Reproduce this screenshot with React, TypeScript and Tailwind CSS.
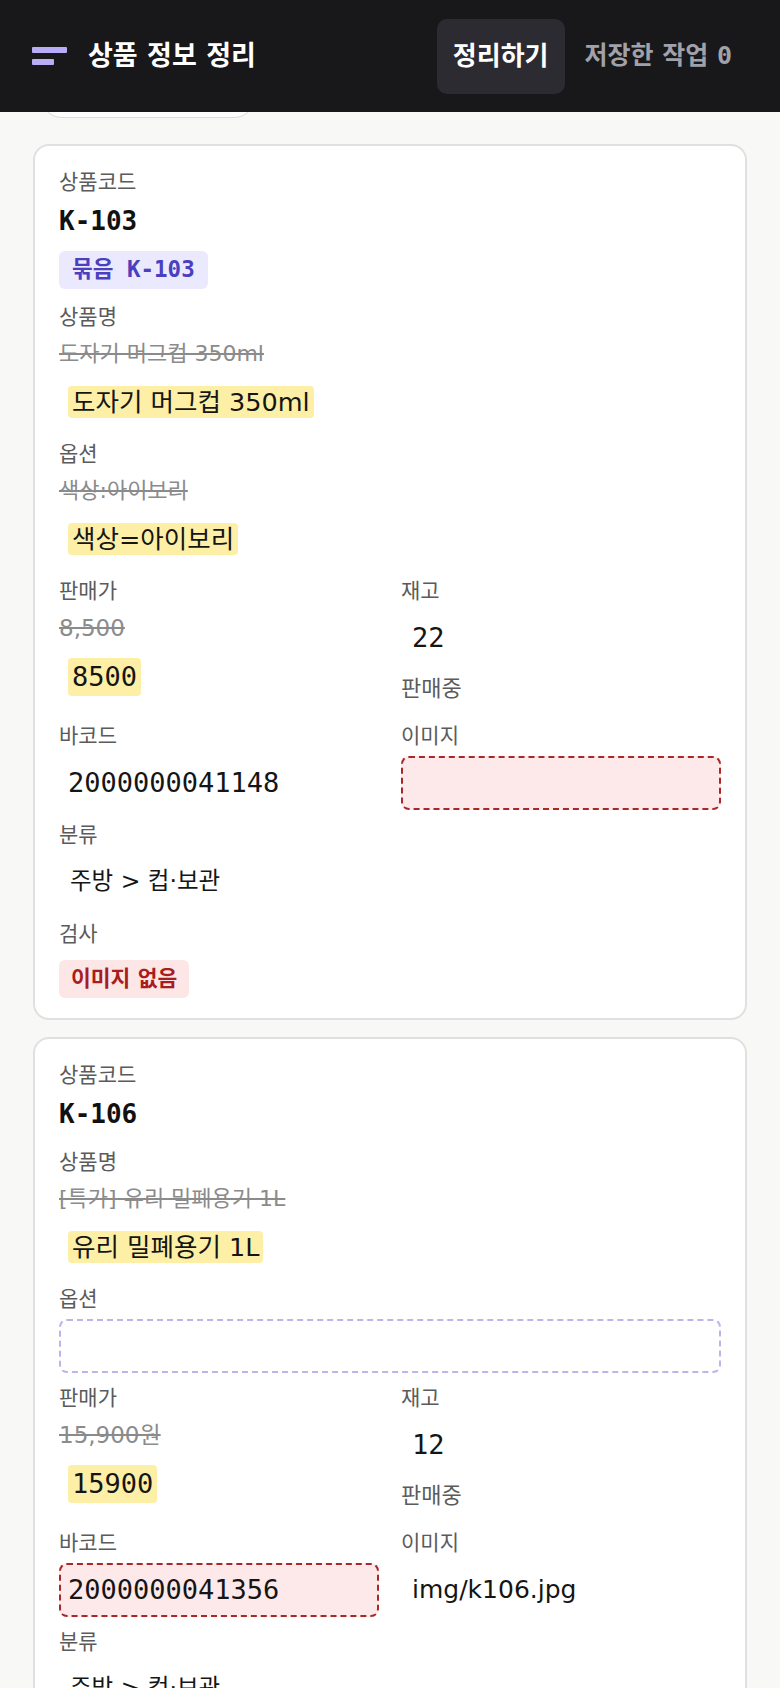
import type { ReactNode } from 'react'

const SANS = 'font-["DejaVu_Sans","Noto_Sans_CJK_KR",sans-serif]'
const MONO = 'font-["DejaVu_Sans_Mono","Noto_Sans_CJK_KR",monospace]'

type BoxState = 'plain' | 'missing' | 'empty'

interface Product {
  code:      string
  bundle?:   string
  name:      { before: string; after: string }
  option:    { before?: string; after?: string }
  price:     { before: string; after: string }
  stock:     string
  status:    string
  barcode:   { value: string; state: BoxState }
  image:     { value?: string; state: BoxState }
  category:  string
  checks:    string[]
}

const PRODUCTS: Product[] = [
  {
    code:     'K-103',
    bundle:   'K-103',
    name:     { before: '도자기 머그컵 350ml', after: '도자기 머그컵 350ml' },
    option:   { before: '색상:아이보리', after: '색상=아이보리' },
    price:    { before: '8,500', after: '8500' },
    stock:    '22',
    status:   '판매중',
    barcode:  { value: '2000000041148', state: 'plain' },
    image:    { state: 'missing' },
    category: '주방 > 컵·보관',
    checks:   ['이미지 없음'],
  },
  {
    code:     'K-106',
    name:     { before: '[특가] 유리 밀폐용기 1L', after: '유리 밀폐용기 1L' },
    option:   {},
    price:    { before: '15,900원', after: '15900' },
    stock:    '12',
    status:   '판매중',
    barcode:  { value: '2000000041356', state: 'missing' },
    image:    { value: 'img/k106.jpg', state: 'plain' },
    category: '주방 > 컵·보관',
    checks:   ['바코드 확인'],
  },
]

function Label({ children }: { children: ReactNode }) {
  return (
    <p className={`${SANS} text-[21px] leading-[28px] text-[#5b5b5b]`}>{children}</p>
  )
}

function Before({ children }: { children: ReactNode }) {
  return (
    <p className={`${SANS} mt-[8px] text-[22px] leading-[30px] text-[#8b8b8b] line-through`}>
      {children}
    </p>
  )
}

function ValueBox({ state = 'plain', children }: { state?: BoxState; children?: ReactNode }) {
  const look =
    state === 'missing'
      ? 'border-dashed border-[#a82828] bg-[#fde9e9]'
      : state === 'empty'
        ? 'border-dashed border-[#bdb4ea] bg-white'
        : 'border-transparent'
  return (
    <div className={`mt-[6px] flex h-[54px] items-center rounded-lg border-2 px-[7px] text-[#151515] ${look}`}>
      {children}
    </div>
  )
}

function Mark({ mono, children }: { mono?: boolean; children: ReactNode }) {
  return (
    <span
      className={
        mono
          ? `${MONO} inline-flex h-[38px] items-center rounded-[4px] bg-[#fdf0a6] px-1 text-[27px]`
          : `${SANS} inline-flex h-[32px] items-center rounded-[4px] bg-[#fdf0a6] px-1 text-[25.5px]`
      }
    >
      {children}
    </span>
  )
}

function ProductCard({ p }: { p: Product }) {
  return (
    <article className="rounded-[16px] border-2 border-[#e0e0e0] bg-white px-6 pt-[22px] pb-[20px]">
      <div className="flex flex-col gap-[11px]">
        <div className="mb-[3px]">
          <Label>상품코드</Label>
          <p className={`${MONO} mt-[5px] text-[26px] font-bold leading-[40px] text-[#111]`}>{p.code}</p>
          {p.bundle && (
            <span
              className={`${MONO} mt-[10px] inline-flex h-[38px] items-center rounded-md bg-[#ebe9fd] px-[13px] text-[22.5px] font-bold text-[#4a3fbf]`}
            >
              묶음 {p.bundle}
            </span>
          )}
        </div>

        <div>
          <Label>상품명</Label>
          <Before>{p.name.before}</Before>
          <ValueBox>
            <Mark>{p.name.after}</Mark>
          </ValueBox>
        </div>

        <div>
          <Label>옵션</Label>
          {p.option.before && <Before>{p.option.before}</Before>}
          {p.option.after ? (
            <ValueBox>
              <Mark>{p.option.after}</Mark>
            </ValueBox>
          ) : (
            <ValueBox state="empty" />
          )}
        </div>

        <div className="grid grid-cols-2 gap-x-[22px]">
          <div>
            <Label>판매가</Label>
            <Before>
              <span className="text-[23px]">{p.price.before}</span>
            </Before>
            <ValueBox>
              <Mark mono>{p.price.after}</Mark>
            </ValueBox>
          </div>
          <div>
            <Label>재고</Label>
            <ValueBox>
              <span className={`${MONO} px-[2px] text-[27px]`}>{p.stock}</span>
            </ValueBox>
            <p className={`${SANS} flex h-[46px] items-center text-[22px] text-[#5b5b5b]`}>{p.status}</p>
          </div>
        </div>

        <div className="grid grid-cols-2 gap-x-[22px]">
          <div>
            <Label>바코드</Label>
            <ValueBox state={p.barcode.state}>
              <span className={`${MONO} text-[27px]`}>{p.barcode.value}</span>
            </ValueBox>
          </div>
          <div>
            <Label>이미지</Label>
            <ValueBox state={p.image.state}>
              {p.image.value && <span className={`${SANS} px-[2px] text-[25px]`}>{p.image.value}</span>}
            </ValueBox>
          </div>
        </div>

        <div>
          <Label>분류</Label>
          <ValueBox>
            <span className={`${SANS} px-[2px] text-[23.5px]`}>{p.category}</span>
          </ValueBox>
        </div>

        <div>
          <Label>검사</Label>
          <div className="mt-[12px] flex flex-wrap gap-2">
            {p.checks.map((c) => (
              <span
                key={c}
                className={`${SANS} inline-flex h-[38px] items-center rounded-md bg-[#fde6e6] px-3 text-[21.5px] font-bold text-[#a81d1d]`}
              >
                {c}
              </span>
            ))}
          </div>
        </div>
      </div>
    </article>
  )
}

export default function App() {
  return (
    <div className={`${SANS} min-h-screen bg-[#f8f8f6]`}>
      <header className="sticky top-0 z-10 flex h-[112px] items-center justify-between bg-[#18181b] px-8">
        <div className="flex items-center">
          <div className="flex flex-col gap-[6px]" aria-hidden="true">
            <span className="block h-[6px] w-[35px] rounded-[1px] bg-[#b8acf6]" />
            <span className="block h-[6px] w-[22px] rounded-[1px] bg-[#b8acf6]" />
          </div>
          <h1 className="ml-[21px] text-[27px] font-bold text-white">상품 정보 정리</h1>
        </div>
        <nav className="flex items-center gap-1">
          <button
            type="button"
            className="flex h-[75px] items-center rounded-[10px] bg-[#2c2b32] px-4 text-[26px] font-bold text-white"
          >
            정리하기
          </button>
          <button
            type="button"
            className="flex h-[75px] items-center rounded-[10px] px-4 text-[25px] font-bold text-[#a1a1aa]"
          >
            저장한 작업&nbsp;<span className={MONO}>0</span>
          </button>
        </nav>
      </header>

      <div className="ml-[40px] -mt-[42px] h-[48px] w-[216px] rounded-[22px] border-[1.5px] border-[#dcdcdc] bg-white" />

      <main className="flex flex-col gap-[17px] px-[33px] pt-[26px] pb-8">
        {PRODUCTS.map((p) => (
          <ProductCard key={p.code} p={p} />
        ))}
      </main>
    </div>
  )
}
